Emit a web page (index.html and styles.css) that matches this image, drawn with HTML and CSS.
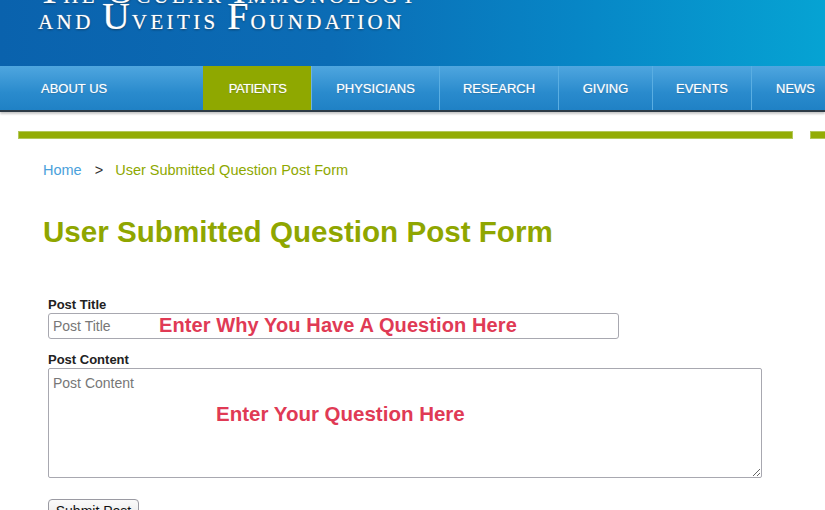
FILE: index.html
```html
<!DOCTYPE html>
<html>
<head>
<meta charset="utf-8">
<link rel="stylesheet" href="styles.css">
</head>
<body>
<header class="masthead">
  <div class="logo">
    <div class="logo-line"><span class="cap">T</span>he <span class="cap">O</span>cular <span class="cap">I</span>mmunology</div>
    <div class="logo-line">and <span class="cap">U</span>veitis <span class="cap">F</span>oundation</div>
  </div>
</header>
<nav class="mainnav">
  <a class="nav-item first">ABOUT US</a>
  <a class="nav-item active">PATIENTS</a>
  <a class="nav-item w-phys">PHYSICIANS</a>
  <a class="nav-item w-res">RESEARCH</a>
  <a class="nav-item w-giv">GIVING</a>
  <a class="nav-item w-evt">EVENTS</a>
  <a class="nav-item w-news">NEWS</a>
</nav>
<div class="rule-row">
  <div class="rule main"></div>
  <div class="rule side"></div>
</div>
<main class="content">
  <div class="breadcrumb"><a class="crumb-home">Home</a><span class="crumb-sep">&gt;</span><span class="crumb-current">User Submitted Question Post Form</span></div>
  <h1 class="page-title">User Submitted Question Post Form</h1>
  <form class="post-form">
    <label class="field-label">Post Title</label>
    <div class="field">
      <input class="text-input" type="text" placeholder="Post Title">
      <span class="note note-title">Enter Why You Have A Question Here</span>
    </div>
    <label class="field-label second">Post Content</label>
    <div class="field">
      <textarea class="text-area" placeholder="Post Content"></textarea>
      <span class="note note-content">Enter Your Question Here</span>
    </div>
    <button class="submit-btn" type="button">Submit Post</button>
  </form>
</main>
</body>
</html>
```
FILE: styles.css
```css
* { box-sizing: border-box; }
html, body { margin: 0; padding: 0; background: #fff; overflow: hidden; }
body { font-family: "Liberation Sans", Arial, sans-serif; width: 825px; height: 510px; }

.masthead {
  height: 66px;
  background: linear-gradient(90deg, #0a62ad 0%, #0b6cb5 40%, #0786c6 70%, #06a3d3 100%);
  overflow: hidden;
}
.logo {
  padding-left: 38px;
  margin-top: -22.5px;
  color: #fff;
  font-family: "Liberation Serif", "Times New Roman", serif;
  text-transform: uppercase;
  font-size: 21px;
  letter-spacing: 3.4px;
  text-shadow: 0 1px 2px rgba(0,0,0,0.45), 0 0 1px rgba(255,255,255,0.7);
}
.logo-line { height: 26.5px; line-height: 25.5px; white-space: nowrap; }
.logo .cap { font-size: 38px; letter-spacing: 2px; }

.mainnav {
  display: flex;
  height: 46px;
  background: linear-gradient(#4fa6df, #2a8bcd 60%, #1f81c5);
  border-bottom: 2px solid #2d3a45;
  box-shadow: 0 2px 2px #c8c8c8;
  overflow: hidden;
}
.nav-item {
  flex-shrink: 0;
  display: flex;
  align-items: center;
  justify-content: center;
  padding-top: 1px;
  color: #fff;
  font-size: 13px;
  text-shadow: 0 0 1px rgba(255,255,255,0.5), 0 1px 1px rgba(0,0,0,0.2);
  border-left: 1px solid #5aaee2;
  white-space: nowrap;
}
.nav-item.first { border-left: none; padding-left: 41px; width: 203px; justify-content: flex-start; }
.nav-item.active { width: 108px; background: #8fa800; border-left-color: #8fa800; letter-spacing: -0.5px; }
.nav-item.active + .nav-item { border-left-color: #6fb3e0; }
.w-phys { width: 128px; }
.w-res { width: 119px; }
.w-giv { width: 94px; }
.w-evt { width: 99px; }
.w-news { padding-left: 24px; justify-content: flex-start; flex: 1; }

.rule-row { display: flex; gap: 17px; margin-top: 19px; padding-left: 18px; }
.rule {
  flex-shrink: 0;
  height: 8px;
  background: #93ac06;
  border: 1px solid #b3c85a;
}
.rule.main { width: 775px; }
.rule.side { flex: 1; border-right: none; }

.content { padding: 23px 0 0 43px; }
.breadcrumb { font-size: 14.5px; line-height: 17px; color: #333; }
.crumb-home { color: #4ba1db; }
.crumb-sep { margin: 0 12px 0 13px; }
.crumb-current { color: #8ea800; }

.page-title {
  margin: 35px 0 0;
  font-size: 29.6px;
  line-height: 36px;
  color: #8fa600;
  font-weight: bold;
}

.post-form { margin: 47px 0 0 5px; display: flex; flex-direction: column; align-items: flex-start; }
.field-label { font-size: 13px; line-height: 15px; font-weight: bold; color: #222; margin-bottom: 1px; }
.field-label.second { margin-top: 13px; }
.field { position: relative; }
.text-input {
  display: block;
  width: 571px;
  height: 26px;
  border: 1px solid #a8a8b0;
  border-radius: 3px;
  padding: 0 4px;
  font: 14px "Liberation Sans", Arial, sans-serif;
}
.text-area {
  display: block;
  width: 714px;
  height: 110px;
  border: 1px solid #a8a8b0;
  border-radius: 2px;
  padding: 6px 4px;
  font: 14px "Liberation Sans", Arial, sans-serif;
  resize: both;
}
.text-input::placeholder, .text-area::placeholder { color: #777; }
.note {
  position: absolute;
  color: #e03a55;
  font-weight: bold;
  font-size: 20px;
  white-space: nowrap;
  pointer-events: none;
}
.note-title { left: 111px; top: 1px; letter-spacing: 0.1px; }
.note-content { left: 168px; top: 34px; font-size: 20.5px; }

.submit-btn {
  margin-top: 21px;
  width: 91px;
  height: 24px;
  border: 1px solid #9a9aa2;
  border-radius: 4px;
  background: linear-gradient(#fafafa, #e8e8e8);
  font: 14px "Liberation Sans", Arial, sans-serif;
  color: #111;
  padding: 0;
}
```
